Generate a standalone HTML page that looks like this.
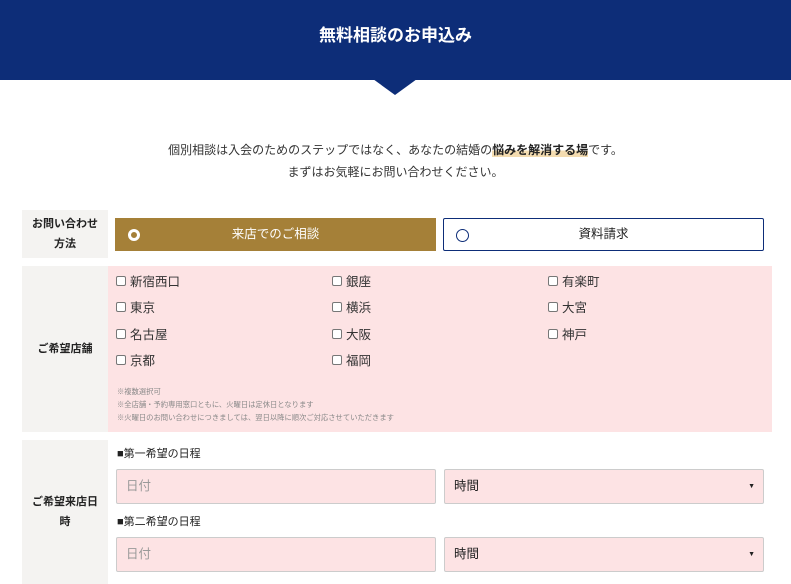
<!DOCTYPE html>
<html><head><meta charset="utf-8"><style>
*{margin:0;padding:0;box-sizing:border-box}
body{width:791px;height:584px;overflow:hidden;background:#fff;font-family:"Liberation Sans","Noto Sans CJK JP",sans-serif;color:#333;position:relative}
.a{position:absolute}
.hd{left:0;top:0;width:791px;height:80px;background:#0d2d78;color:#fff;font-weight:bold;font-size:17px;text-align:center;line-height:72px}
.tri{left:373px;top:79px;width:0;height:0;border-left:22px solid transparent;border-right:22px solid transparent;border-top:16px solid #0d2d78}
.intro{left:0;width:791px;text-align:center;font-size:12px;color:#333}
.lab{background:#f4f3f1;left:22px;width:86px;font-size:11px;font-weight:bold;color:#222;display:flex;align-items:center;justify-content:center;text-align:center;line-height:20px}
.pink{background:#fde3e4}
.cb{font-size:12.5px;color:#333;display:flex;align-items:center}
.cb i{display:inline-block;width:10px;height:10px;border:1px solid #777;border-radius:2px;background:#fff;margin-right:4px}
.note{font-size:7.3px;color:#888;line-height:13px}
.inp{background:#fde3e4;border:1px solid #ccc;border-radius:2px;height:35px;font-size:12.5px;padding-left:9px;line-height:33px}
.sub{font-size:11px;color:#222}
</style></head><body>
<div class="a hd">無料相談のお申込み</div>
<div class="a tri"></div>
<div class="a intro" style="top:139px;line-height:22px">個別相談は入会のためのステップではなく、あなたの結婚の<b style="background:linear-gradient(transparent 55%,#f4dcb0 55%);font-weight:bold;color:#222">悩みを解消する場</b>です。<br>まずはお気軽にお問い合わせください。</div>

<div class="a lab" style="top:210px;height:48px">お問い合わせ<br>方法</div>
<div class="a" style="left:115px;top:218px;width:321px;height:33px;background:#a58038;color:#fff;font-size:12.5px;text-align:center;line-height:33px">来店でのご相談
<span class="a" style="left:13px;top:11px;width:12px;height:12px;border-radius:50%;border:3px solid #fff"></span></div>
<div class="a" style="left:443px;top:218px;width:321px;height:33px;border:1px solid #0d2d78;border-radius:2px;color:#222;font-size:12.5px;text-align:center;line-height:31px">資料請求
<span class="a" style="left:12px;top:10px;width:13px;height:13px;border-radius:50%;border:1px solid #0d2d78"></span></div>

<div class="a lab" style="top:266px;height:166px">ご希望店舗</div>
<div class="a pink" style="left:108px;top:266px;width:664px;height:166px"></div>
<div class="a cb" style="left:116px;top:271px"><i></i>新宿西口</div>
<div class="a cb" style="left:332px;top:271px"><i></i>銀座</div>
<div class="a cb" style="left:548px;top:271px"><i></i>有楽町</div>
<div class="a cb" style="left:116px;top:297px"><i></i>東京</div>
<div class="a cb" style="left:332px;top:297px"><i></i>横浜</div>
<div class="a cb" style="left:548px;top:297px"><i></i>大宮</div>
<div class="a cb" style="left:116px;top:324px"><i></i>名古屋</div>
<div class="a cb" style="left:332px;top:324px"><i></i>大阪</div>
<div class="a cb" style="left:548px;top:324px"><i></i>神戸</div>
<div class="a cb" style="left:116px;top:350px"><i></i>京都</div>
<div class="a cb" style="left:332px;top:350px"><i></i>福岡</div>
<div class="a note" style="left:117px;top:385px">※複数選択可<br>※全店舗・予約専用窓口ともに、火曜日は定休日となります<br>※火曜日のお問い合わせにつきましては、翌日以降に順次ご対応させていただきます</div>

<div class="a lab" style="top:440px;height:144px">ご希望来店日<br>時</div>
<div class="a sub" style="left:117px;top:445px">■第一希望の日程</div>
<div class="a inp" style="left:116px;top:469px;width:320px;color:#999">日付</div>
<div class="a inp" style="left:444px;top:469px;width:320px;color:#222">時間<span class="a" style="right:8px;top:0;font-size:7px">▼</span></div>
<div class="a sub" style="left:117px;top:513px">■第二希望の日程</div>
<div class="a inp" style="left:116px;top:537px;width:320px;color:#999">日付</div>
<div class="a inp" style="left:444px;top:537px;width:320px;color:#222">時間<span class="a" style="right:8px;top:0;font-size:7px">▼</span></div>
</body></html>
